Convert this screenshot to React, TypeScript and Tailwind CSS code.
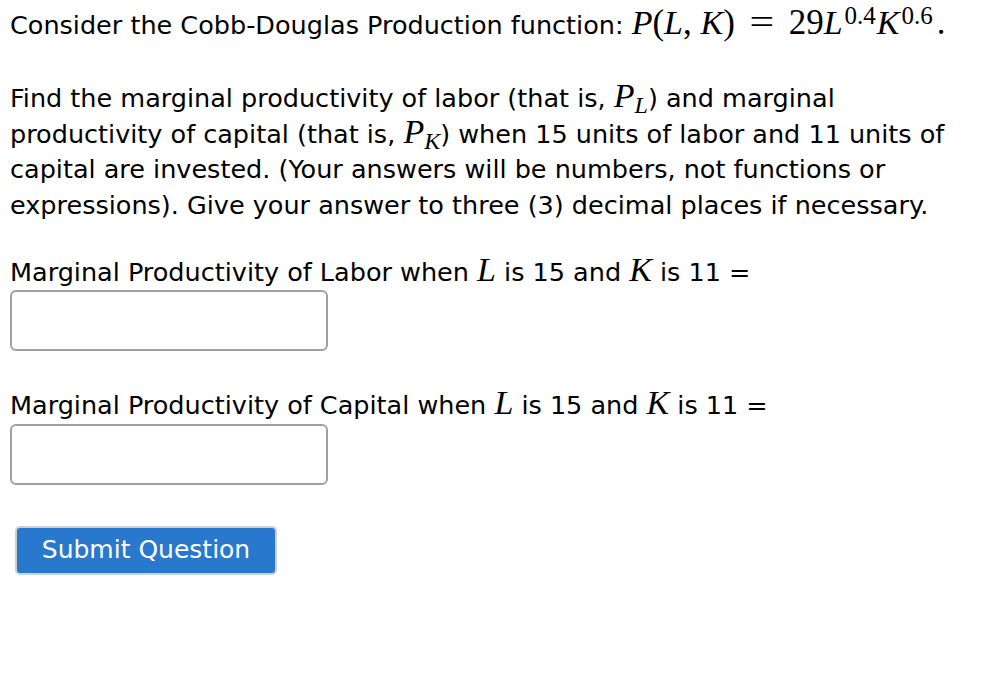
import React from "react";

const serif = { fontFamily: '"Liberation Serif", "DejaVu Serif", serif' };

const M = ({ children }: { children: React.ReactNode }) => (
  <span className="italic text-[34px] leading-[0]" style={serif}>{children}</span>
);

const Sup = ({ children }: { children: React.ReactNode }) => (
  <span className="text-[25px] leading-[0] relative -top-[10px] ml-[2px] mr-[1px]" style={serif}>{children}</span>
);

const Sub = ({ children }: { children: React.ReactNode }) => (
  <span className="italic text-[24px] leading-[0] relative top-[6px]" style={serif}>{children}</span>
);

export default function App() {
  return (
    <div
      className="bg-white w-[998px] h-[680px] text-black pl-[10px] pt-[7px] text-[25.5px] leading-[36px]"
      style={{ fontFamily: '"DejaVu Sans", sans-serif' }}
    >
      <p>
        Consider the Cobb-Douglas Production function:{" "}
        <span className="text-[35px] leading-[0]" style={serif}>
          <M>P</M>(<M>L</M>, <M>K</M>)<span className="ml-[17px] mr-[17px] inline-block scale-x-125">=</span>29<M>L</M>
          <Sup>0.4</Sup>
          <M>K</M>
          <Sup>0.6</Sup>
          <span className="ml-[3px]">.</span>
        </span>
      </p>
      <p className="mt-[38px] leading-[35.7px]">
        Find the marginal productivity of labor (that is, <M>P</M>
        <Sub>L</Sub>) and marginal
        <br />
        productivity of capital (that is, <M>P</M>
        <Sub>K</Sub>) when 15 units of labor and 11 units of
        <br />
        capital are invested. (Your answers will be numbers, not functions or
        <br />
        expressions). Give your answer to three (3) decimal places if necessary.
      </p>
      <p className="mt-[30px]">
        Marginal Productivity of Labor when <M>L</M> is 15 and <M>K</M> is 11 =
      </p>
      <input className="block w-[318px] h-[61px] border-2 border-[#a0a0a0] rounded-[6px]" />
      <p className="mt-[36px]">
        Marginal Productivity of Capital when <M>L</M> is 15 and <M>K</M> is 11 =
      </p>
      <input className="block w-[318px] h-[61px] border-2 border-[#a0a0a0] rounded-[6px] mt-[1px]" />
      <button className="block mt-[41px] ml-[5px] w-[262px] h-[49px] bg-[#2878ce] text-white rounded-[5px] border-2 border-[#d0d0d0] text-[25px]">
        Submit Question
      </button>
    </div>
  );
}
